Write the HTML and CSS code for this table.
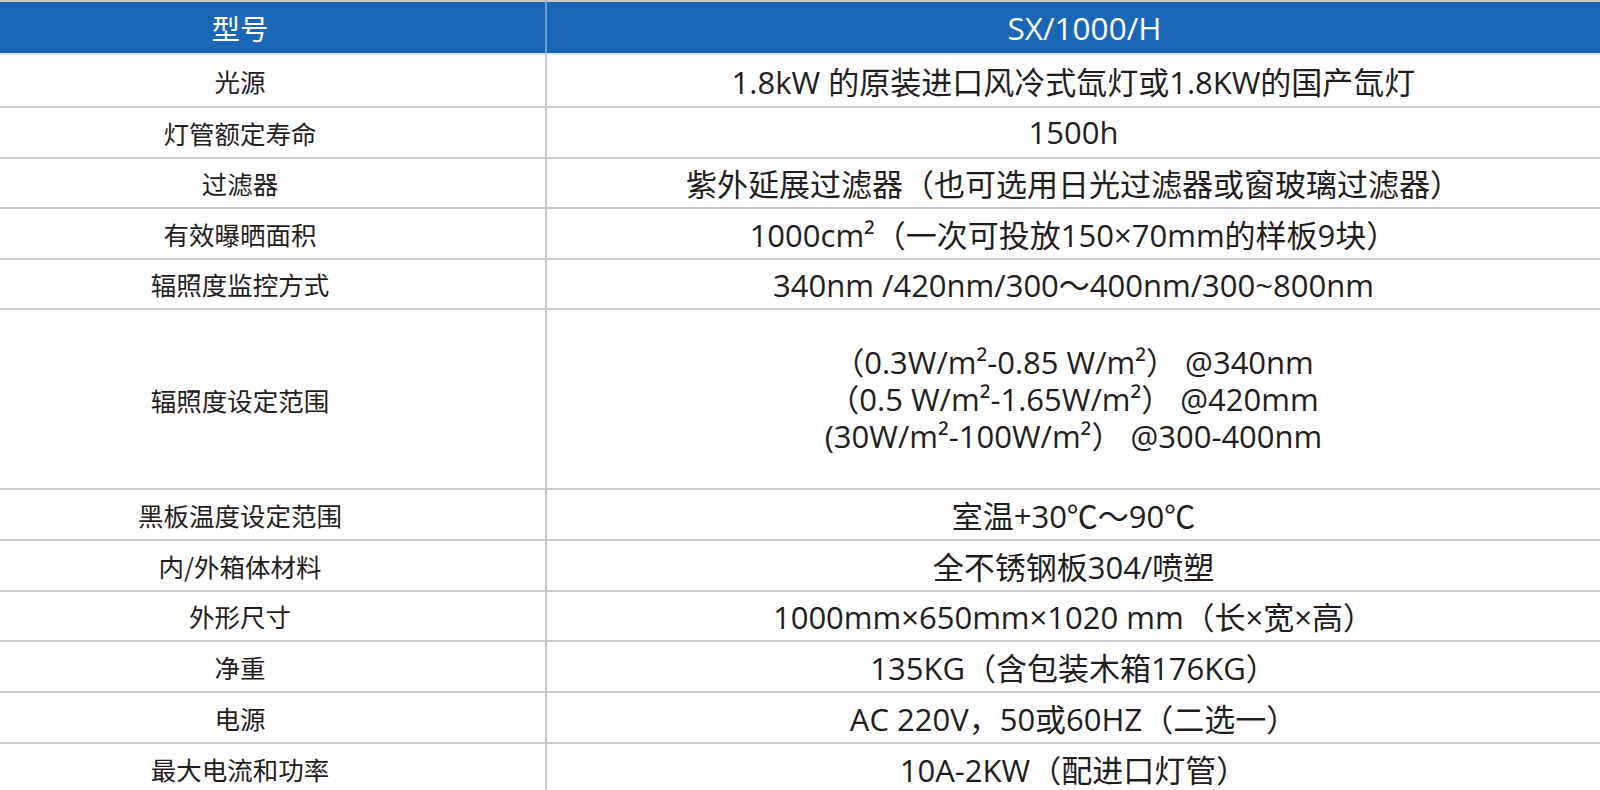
FILE: index.html
```html
<!DOCTYPE html>
<html lang="zh-CN">
<head>
<meta charset="utf-8">
<title>SX/1000/H 参数</title>
<link rel="stylesheet" href="styles.css">
</head>
<body>
<table class="spec">
  <thead>
    <tr class="head-row">
      <th class="c-label">型号</th>
      <th class="c-value">SX/1000/H</th>
    </tr>
  </thead>
  <tbody>
    <tr class="r-first"><td class="c-label">光源</td><td class="c-value">1.8kW 的原装进口风冷式氙灯或1.8KW的国产氙灯</td></tr>
    <tr class="r-a"><td class="c-label">灯管额定寿命</td><td class="c-value">1500h</td></tr>
    <tr class="r-a"><td class="c-label">过滤器</td><td class="c-value">紫外延展过滤器（也可选用日光过滤器或窗玻璃过滤器）</td></tr>
    <tr class="r-a"><td class="c-label">有效曝晒面积</td><td class="c-value">1000cm²（一次可投放150×70mm的样板9块）</td></tr>
    <tr class="r-a"><td class="c-label">辐照度监控方式</td><td class="c-value">340nm /420nm/300～400nm/300~800nm</td></tr>
    <tr class="r-tall"><td class="c-label">辐照度设定范围</td><td class="c-value multi">（0.3W/m²-0.85 W/m²）&nbsp;@340nm<br>（0.5 W/m²-1.65W/m²）&nbsp;@420mm<br>(30W/m²-100W/m²）&nbsp;@300-400nm</td></tr>
    <tr class="r-b"><td class="c-label">黑板温度设定范围</td><td class="c-value">室温+30℃～90℃</td></tr>
    <tr class="r-b"><td class="c-label">内/外箱体材料</td><td class="c-value">全不锈钢板304/喷塑</td></tr>
    <tr class="r-b"><td class="c-label">外形尺寸</td><td class="c-value">1000mm×650mm×1020 mm（长×宽×高）</td></tr>
    <tr class="r-b"><td class="c-label">净重</td><td class="c-value">135KG（含包装木箱176KG）</td></tr>
    <tr class="r-b"><td class="c-label">电源</td><td class="c-value">AC 220V，50或60HZ（二选一）</td></tr>
    <tr class="r-b"><td class="c-label">最大电流和功率</td><td class="c-value">10A-2KW（配进口灯管）</td></tr>
  </tbody>
</table>
</body>
</html>
```

FILE: styles.css
```css
html, body {
  margin: 0;
  padding: 0;
  background: #ffffff;
}

body {
  font-family: "Open Sans", "Noto Sans CJK SC", sans-serif;
  color: #1f1d1e;
  overflow: hidden;
}

.spec {
  width: 1600px;
  border-collapse: separate;
  border-spacing: 0;
  table-layout: fixed;
}

.spec th,
.spec td {
  padding: 0;
  text-align: center;
  vertical-align: middle;
  border-bottom: 2px solid #cdcac6;
  white-space: nowrap;
}

.spec .c-label {
  width: 480px;
  padding-right: 65px;
  border-right: 2px solid #cdcac6;
  font-size: 25.5px;
  font-family: "Noto Sans CJK SC", sans-serif;
}

.spec .c-value {
  font-size: 31px;
}

.head-row th {
  background: #1967b6;
  color: #ffffff;
  font-weight: 400;
  height: 51px;
  border-top: 2px solid #c9c9c9;
  border-bottom: 2px solid #e2e4e8;
}

.head-row .c-label {
  font-size: 28.5px;
  border-right: 2px solid #6d9ed3;
}

.head-row .c-value {
  font-size: 31.5px;
  padding-left: 22px;
}

.r-first td {
  height: 51px;
}

.r-a td {
  height: 48.5px;
}

.r-tall td {
  height: 178px;
}

.r-b td {
  height: 48.8px;
}

.multi {
  line-height: 37px;
}
```
